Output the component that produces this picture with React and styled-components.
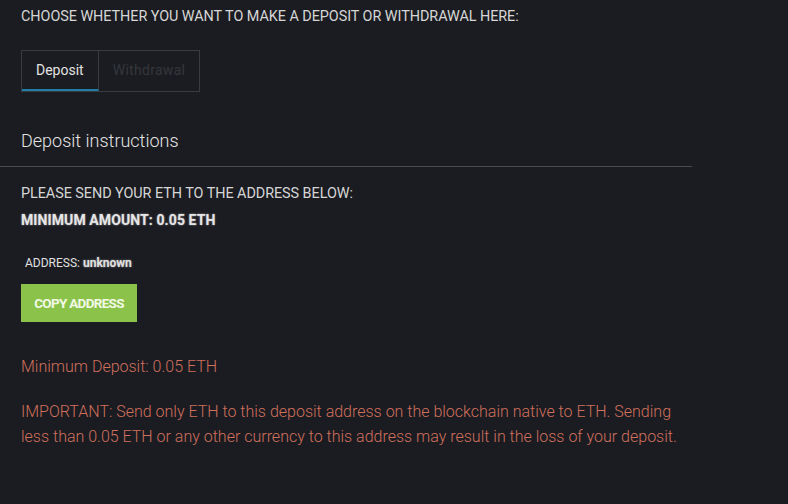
import React, { useState } from 'react';
import styled, { createGlobalStyle } from 'styled-components';

const GlobalStyle = createGlobalStyle`
  html, body {
    margin: 0;
    padding: 0;
    background: #1b1c21;
  }
  body {
    font-family: Roboto, "Liberation Sans", sans-serif;
    color: #dcdcdc;
  }
`;

const Page = styled.div`
  padding-top: 9px;
`;

const Section = styled.div`
  padding: 0 21px;
`;

const Caption = styled.div`
  font-size: 14.4px;
  line-height: 16px;
  font-weight: 400;
  letter-spacing: -0.05px;
  text-transform: uppercase;
  color: #d6d6d6;
`;

const Tabs = styled.div`
  display: inline-flex;
  margin-top: 25px;
  border: 1px solid #3a3b40;
`;

const Tab = styled.button`
  font-family: inherit;
  font-size: 14px;
  font-weight: 400;
  height: 40px;
  padding: 0 14px;
  background: transparent;
  border: none;
  border-right: 1px solid #3a3b40;
  border-bottom: 2px solid ${(p) => (p.$active ? '#1f7ea3' : 'transparent')};
  color: ${(p) => (p.$active ? '#e2e2e2' : '#35363b')};
  letter-spacing: ${(p) => (p.$active ? '0' : '0.3px')};
  cursor: pointer;
  &:last-child {
    border-right: none;
  }
`;

const Heading = styled.h2`
  width: 692px;
  box-sizing: border-box;
  margin: 38px 0 0;
  padding: 0 21px 14px;
  font-size: 18px;
  line-height: 22px;
  font-weight: 300;
  color: #e4e4e4;
  border-bottom: 1px solid #4a4b50;
`;

const Instructions = styled(Section)`
  padding-top: 19px;
`;

const Strong = styled.div`
  margin-top: 10px;
  font-size: 14px;
  line-height: 16px;
  font-weight: 700;
  letter-spacing: 0.1px;
  color: #e6e6e6;
  text-shadow: 0 0 2px rgba(255, 255, 255, 0.55);
`;

const AddressLine = styled.div`
  margin-top: 28px;
  margin-left: 4px;
  font-size: 12px;
  line-height: 14px;
  color: #e0e0e0;
  b {
    font-weight: 700;
    text-shadow: 0 0 2px rgba(255, 255, 255, 0.5);
  }
`;

const CopyButton = styled.button`
  display: block;
  margin-top: 14px;
  width: 116px;
  height: 38px;
  background: #8bc34a;
  border: none;
  color: #f2f9e6;
  font-family: inherit;
  font-size: 13.5px;
  font-weight: 700;
  letter-spacing: -0.7px;
  text-transform: uppercase;
  cursor: pointer;
`;

const Warning = styled.p`
  margin: ${(p) => p.$top}px 0 0;
  max-width: 680px;
  font-size: 16px;
  line-height: 25px;
  font-weight: 300;
  color: #d0705d;
`;

export default function App() {
  const [tab, setTab] = useState('deposit');
  return (
    <Page>
      <GlobalStyle />
      <Section>
        <Caption>Choose whether you want to make a deposit or withdrawal here:</Caption>
        <Tabs>
          <Tab $active={tab === 'deposit'} onClick={() => setTab('deposit')}>Deposit</Tab>
          <Tab $active={tab === 'withdrawal'} onClick={() => setTab('withdrawal')}>Withdrawal</Tab>
        </Tabs>
      </Section>
      <Heading>Deposit instructions</Heading>
      <Instructions>
        <Caption>Please send your ETH to the address below:</Caption>
        <Strong>MINIMUM AMOUNT: 0.05 ETH</Strong>
        <AddressLine>ADDRESS: <b>unknown</b></AddressLine>
        <CopyButton>Copy address</CopyButton>
        <Warning $top={32}>Minimum Deposit: 0.05 ETH</Warning>
        <Warning $top={20}>
          IMPORTANT: Send only ETH to this deposit address on the blockchain native to ETH. Sending
          less than 0.05 ETH or any other currency to this address may result in the loss of your deposit.
        </Warning>
      </Instructions>
    </Page>
  );
}
